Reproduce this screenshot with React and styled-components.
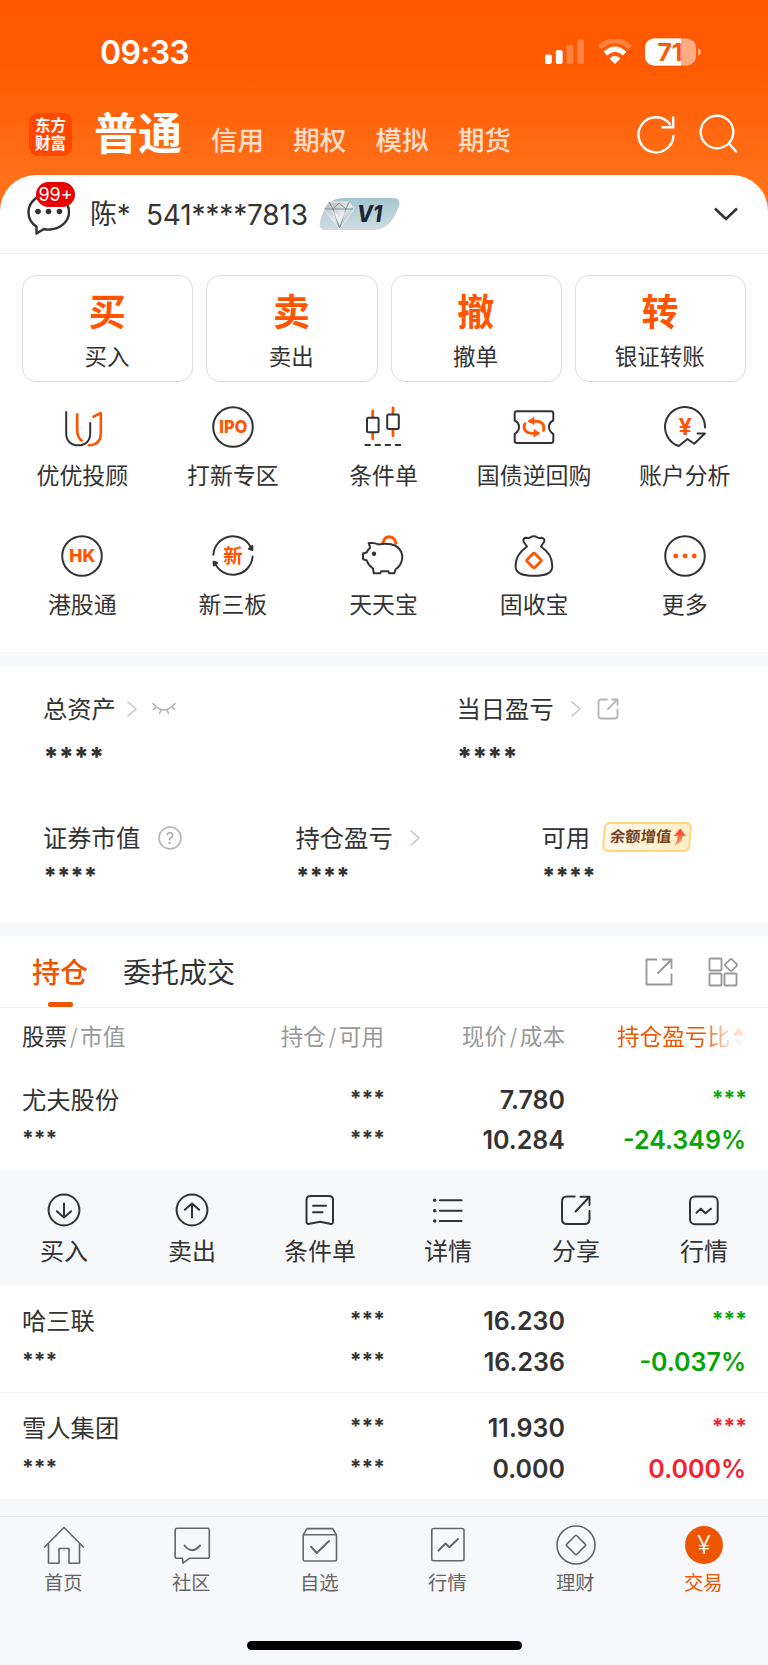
// src/App.jsx
import React from 'react';
import styled, { createGlobalStyle } from 'styled-components';

const GlobalStyle = createGlobalStyle`
  * {
    box-sizing: border-box;
  }
  body {
    margin: 0;
    background: #f7f8fa;
    color: #333;
    font-family: Inter, "Noto Sans CJK SC", sans-serif;
  }
`;

const Page = styled.div`
  width: 768px;
  height: 1665px;
  display: flex;
  flex-direction: column;
  overflow: hidden;
  background: linear-gradient(#ff5800 0, #ff5a02 66px, #ff7019 175px, #ff711a 220px, #f7f8fa 220px);
`;

const Svg = styled.svg`
  display: block;
  flex: none;
  fill: none;
  stroke: ${props => props.$color || '#333'};
  stroke-width: ${props => props.$line || 2};
  stroke-linecap: ${props => props.$cap || 'round'};
  stroke-linejoin: round;
  text {
    stroke: none;
    text-anchor: middle;
  }
`;

/* ---------- status bar ---------- */

const StatusBar = styled.div`
  height: 105px;
  padding: 0 67px 0 100px;
  display: flex;
  align-items: center;
`;

const Clock = styled.div`
  flex: 1;
  color: #fff;
  font-size: 32px;
  font-weight: 600;
  letter-spacing: -0.7px;
`;

const StatusIcons = styled.div`
  display: flex;
  align-items: center;
  gap: 13.5px;
`;

/* ---------- header ---------- */

const Header = styled.div`
  height: 70px;
  padding: 0 29px 0 29px;
  display: flex;
  align-items: center;
  color: #fff;
`;

const Logo = styled.div`
  width: 43px;
  height: 43px;
  margin: -11px 22px 0 0;
  padding-top: 1px;
  border-radius: 9px;
  background: #ff4700;
  display: flex;
  flex-direction: column;
  align-items: center;
  justify-content: center;
  font-size: 15.5px;
  font-weight: 700;
  line-height: 18px;
`;

const MainTab = styled.div`
  margin-top: -11px;
  font-size: 44px;
  font-weight: 700;
  line-height: 50px;
`;

const SubTabs = styled.div`
  flex: 1;
  margin: 0 0 0 29px;
  display: flex;
  gap: 29.3px;
  font-size: 26.5px;
  font-weight: 500;
  line-height: 32px;
  color: rgba(255, 255, 255, 0.8);
`;

const HeaderIcons = styled.div`
  margin-top: -11px;
  display: flex;
  gap: 23px;
`;

/* ---------- account ---------- */

const Sheet = styled.div`
  border-radius: 36px 36px 0 0;
  background: #fff;
`;

const AccountRow = styled.div`
  height: 79px;
  padding: 1px 29px 0 26px;
  display: flex;
  align-items: center;
  border-bottom: 1px solid #ececec;
  font-size: 28px;
  line-height: 34px;
`;

const Message = styled.div`
  position: relative;
  width: 46px;
  margin: -5px 18px 0 0;
`;

const Badge = styled.span`
  position: absolute;
  left: 10px;
  top: -7px;
  width: 39px;
  height: 25px;
  border-radius: 13px;
  background: #eb0000;
  color: #fff;
  font-size: 18px;
  line-height: 26px;
  text-align: center;
`;

const Owner = styled.span`
  width: 56px;
  margin-top: 1px;
  font-size: 27px;
`;

const AccountNo = styled.span`
  width: 173px;
  margin-top: 1px;
  letter-spacing: -0.15px;
  white-space: nowrap;
`;

const Spacer = styled.span`
  flex: 1;
`;

/* ---------- trade buttons ---------- */

const TradeButtons = styled.div`
  padding: 21px 22px 0;
  display: grid;
  grid-template-columns: repeat(4, 1fr);
  gap: 13px;
`;

const TradeButton = styled.div`
  height: 107px;
  padding: 15px 1px 0 0;
  border: 1.4px solid #dcdcdc;
  border-radius: 14px;
  text-align: center;
`;

const TradeMark = styled.div`
  color: #ff5500;
  font-size: 37px;
  font-weight: 700;
  line-height: 43px;
`;

const TradeLabel = styled.div`
  margin-top: 8px;
  font-size: 22.5px;
  line-height: 30px;
`;

const ToolGrid = styled.div`
  height: 270px;
  padding: 23px 8px 0 7px;
  display: grid;
  grid-template-columns: repeat(5, 1fr);
  grid-auto-rows: 128.7px;
`;

const Tool = styled.div`
  display: flex;
  flex-direction: column;
  align-items: center;
  gap: 12.5px;
  font-size: 22.9px;
  line-height: 30px;
  white-space: nowrap;
`;

/* ---------- assets ---------- */

const Divider = styled.div`
  height: ${props => props.$h || 14}px;
  background: #f7f8fa;
`;

const AssetRow = styled.div`
  height: ${props => props.$h}px;
  padding: ${props => props.$top}px 0 0 43px;
  display: grid;
  grid-template-columns: ${props => props.$cols};
  background: #fff;
`;

const AssetTitle = styled.div`
  height: 32px;
  display: flex;
  align-items: center;
  font-size: 24.3px;
  line-height: 32px;
`;

const Masked = styled.div`
  margin-top: ${props => props.$top}px;
  padding-left: 0.5px;
  font-size: ${props => props.$size}px;
  font-weight: 800;
  line-height: 32px;
`;

const Gap = styled.span`
  width: ${props => props.$w}px;
`;

const Promo = styled.div`
  width: 88px;
  height: 30px;
  margin: -1px 0 0 13px;
  padding-left: 5px;
  display: flex;
  align-items: center;
  gap: 2px;
  border: 2px solid #ffd67a;
  border-radius: 6px;
  background: linear-gradient(90deg, #fffaf0, #ffedc4);
  transform: skewX(-5deg);
  color: #75421c;
  font-size: 15.3px;
  font-weight: 700;
  white-space: nowrap;
`;

/* ---------- holdings ---------- */

const Tabs = styled.div`
  height: 72px;
  padding: 0 30px 0 32px;
  display: flex;
  align-items: stretch;
  gap: 35px;
  border-bottom: 1px solid #f2f3f5;
  background: #fff;
`;

const Tab = styled.div`
  display: flex;
  flex-direction: column;
  align-items: center;
  padding-top: 19px;
  font-size: 28px;
  line-height: 36px;
  font-weight: ${props => (props.$active ? 500 : 400)};
  color: ${props => (props.$active ? '#ee5500' : '#333')};
  &::after {
    content: '';
    width: 25px;
    height: 5px;
    margin-top: 11px;
    border-radius: 2px;
    background: ${props => (props.$active ? '#ee5500' : 'transparent')};
  }
`;

const TabTools = styled.div`
  flex: 1;
  padding-top: 1px;
  display: flex;
  justify-content: flex-end;
  align-items: center;
  gap: 35px;
`;

const TableGrid = styled.div`
  padding: 0 22px;
  display: grid;
  grid-template-columns: 180px 182px 181px 181px;
  background: #fff;
`;

const TableHead = styled(TableGrid)`
  height: 57px;
  line-height: 30px;
  padding-top: 14px;
  font-size: 22.6px;
  color: #999;
`;

const HeadCell = styled.div`
  text-align: ${props => (props.$left ? 'left' : 'right')};
  white-space: nowrap;
  b {
    color: #333;
    font-weight: 400;
  }
  i {
    margin: 0 2.5px;
    font-style: normal;
    font-weight: 300;
  }
`;

const SortCell = styled.div`
  height: 30px;
  display: flex;
  align-items: center;
  justify-content: flex-end;
  gap: 2px;
  color: #ee5500;
  mask-image: linear-gradient(90deg, #000 76%, rgba(0, 0, 0, 0.3) 89%, rgba(0, 0, 0, 0.12));
`;

const StockRow = styled(TableGrid)`
  height: 107px;
  padding-top: 15px;
  border-bottom: 1px solid #f5f6f8;
`;

const Cell = styled.div`
  text-align: ${props => (props.$left ? 'left' : 'right')};
  color: ${props => props.$color || '#333'};
  font-size: 25px;
  font-weight: 600;
  line-height: 40.5px;
  white-space: nowrap;
`;

const StockName = styled.div`
  font-size: 24.3px;
  font-weight: 400;
`;

const Stars = styled.div`
  height: 40.5px;
  margin-right: -1px;
  font-size: 21px;
  font-weight: 700;
  line-height: 38.5px;
`;

const Actions = styled.div`
  height: 115px;
  padding-top: 19px;
  display: grid;
  grid-template-columns: repeat(6, 1fr);
  background: #f7f8fa;
`;

const Action = styled.div`
  display: flex;
  flex-direction: column;
  align-items: center;
  gap: 7px;
  font-size: 24px;
  line-height: 30px;
`;

/* ---------- bottom navigation ---------- */

const BottomNav = styled.div`
  height: 125px;
  padding-top: 6px;
  display: grid;
  grid-template-columns: repeat(6, 1fr);
  border-top: 1px solid #e9eaec;
  background: #f7f8fb;
`;

const NavItem = styled.div`
  display: flex;
  flex-direction: column;
  align-items: center;
  gap: 4px;
  font-size: 19.3px;
  line-height: 24px;
  color: ${props => (props.$active ? '#ee5500' : '#666')};
  span {
    padding-right: 1.5px;
  }
`;

const HomeBar = styled.div`
  width: 275px;
  height: 9px;
  margin: 0 auto 15px;
  border-radius: 5px;
  background: #000;
`;

const HomeArea = styled.div`
  background: #f7f8fb;
`;

/* ---------- icons ---------- */

const O = '#ff5500';

const Signal = () => (
  <Svg width="39" height="26" viewBox="0 0 39 26" $color="none">
    <g fill="#fff">
      <rect x="0" y="15.5" width="6.8" height="9.5" rx="2" />
      <rect x="10.8" y="11" width="6.8" height="14" rx="2" />
      <rect x="21.5" y="6" width="6.8" height="19" rx="2" opacity="0.25" />
      <rect x="32.2" y="0.5" width="6.8" height="24.5" rx="2" opacity="0.25" />
    </g>
  </Svg>
);

const Wifi = () => (
  <Svg width="34" height="26" viewBox="0 0 34 26" $color="#fff" $line="5" $cap="butt">
    <path d="M1.8 8.5Q17-5.2 32.2 8.5" opacity="0.25" />
    <path d="M7.4 14.6Q17 5.6 26.6 14.6" />
    <path d="M17 25L11.6 19.4Q17 14.6 22.4 19.4Z" fill="#fff" stroke="none" />
  </Svg>
);

const Battery = () => (
  <Svg width="56" height="28" viewBox="0 0 56 28" $color="none">
    <defs>
      <clipPath id="batteryBody">
        <rect x="0" y="0.5" width="51" height="27" rx="9" />
      </clipPath>
    </defs>
    <g clipPath="url(#batteryBody)">
      <rect width="51" height="28" fill="#fff" opacity="0.5" />
      <rect width="36" height="28" fill="#fff" />
    </g>
    <path d="M53 10Q56 11.5 56 14T53 18Z" fill="#fff" opacity="0.5" />
    <text x="25" y="22.5" fontSize="24" fontWeight="700" fill="#ff5800" textLength="25" lengthAdjust="spacingAndGlyphs">71</text>
  </Svg>
);

const Refresh = () => (
  <Svg width="40" height="40" viewBox="0 0 40 40" $color="#fff" $line="2.4" $cap="butt">
    <path d="M37.5 21A17.5 17.5 0 1 1 34.5 11" />
    <path d="M37.2 2.5V13.3H25.5" strokeLinejoin="miter" />
  </Svg>
);

const Search = () => (
  <Svg width="40" height="40" viewBox="0 0 40 40" $color="#fff" $line="2.4">
    <circle cx="18" cy="18" r="16.3" />
    <path d="M30 29.5L37 37.5" />
  </Svg>
);

const Bubble = () => (
  <Svg width="46" height="46" viewBox="0 0 46 46" $line="2.4">
    <path d="M10.5 37.5L10.5 44.5L18 40Q21 41 24 40.5C35 40 43 32 43 23C43 13 34 5 23 5S2.5 13 2.5 23C2.5 29 5.5 34.5 10.5 37.5Z" />
    <g fill="#333" stroke="none">
      <circle cx="12" cy="22.5" r="2.8" />
      <circle cx="22.5" cy="22.5" r="2.8" />
      <circle cx="33.5" cy="22.5" r="2.8" />
    </g>
  </Svg>
);

const VipBadge = () => (
  <Svg width="82" height="32" viewBox="0 0 82 32" $color="none">
    <defs>
      <linearGradient id="vipBg" x1="0" y1="0" x2="0" y2="1">
        <stop offset="0" stopColor="#a5c5d0" />
        <stop offset="1" stopColor="#cfdde3" />
      </linearGradient>
      <linearGradient id="gem" x1="0" y1="0" x2="1" y2="1">
        <stop offset="0" stopColor="#aab3b6" />
        <stop offset="0.5" stopColor="#e4e9eb" />
        <stop offset="1" stopColor="#8f9b9f" />
      </linearGradient>
    </defs>
    <path d="M24 0H74Q82 0 80 8C75 22 68 32 54 32H7Q-1 32 1 24C4 12 10 0 24 0Z" fill="url(#vipBg)" />
    <path d="M10 4H30L35 11L20.5 31L5 11Z" fill="url(#gem)" stroke="#f4f7f8" strokeWidth="0.8" />
    <path d="M6 11H34M10 4L14 11L20.5 30L27 11L30 4M14 11L20 5L27 11" stroke="#7f8d92" strokeWidth="1" />
    <path d="M13 12L20.5 19L28 12L20.5 27Z" fill="#fff" opacity="0.6" />
    <text x="50.5" y="24" fontSize="23" fontWeight="800" fontStyle="italic" fill="#1d2736" textLength="25" lengthAdjust="spacingAndGlyphs">V1</text>
  </Svg>
);

const ChevronDown = () => (
  <Svg width="26" height="16" viewBox="0 0 26 16" $line="2.6" $cap="butt">
    <path d="M2 2.5L13 13L24 2.5" strokeLinejoin="miter" />
  </Svg>
);

const ChevronRight = () => (
  <Svg width="10" height="16" viewBox="0 0 10 16" $color="#c4c4c4" $line="1.5">
    <path d="M1 1L9 8L1 15" />
  </Svg>
);

const ClosedEye = () => (
  <Svg width="24" height="14" viewBox="0 0 24 14" $color="#b5b5b5" $line="1.6">
    <path d="M1 1.5Q12 14.5 23 1.5M4 5L1.5 7.5M8.8 8L7.5 11.5M15.2 8L16.5 11.5M20 5L22.5 7.5" />
  </Svg>
);

const ShareSmall = () => (
  <Svg width="22" height="22" viewBox="0 0 22 22" $color="#b5b5b5" $line="1.8">
    <path d="M10 1.5H4.5Q1.5 1.5 1.5 4.5V17.5Q1.5 20.5 4.5 20.5H17.5Q20.5 20.5 20.5 17.5V11.5" />
    <path d="M11 11L20.3 1.7M15 1.5H20.5V7" />
  </Svg>
);

const Help = () => (
  <Svg width="24" height="24" viewBox="0 0 24 24" $color="#b5b5b5" $line="1.6">
    <circle cx="12" cy="12" r="11" />
    <text x="12" y="17.8" fontSize="16.5" fill="#aaa">?</text>
  </Svg>
);

const RiseArrow = () => (
  <Svg width="13" height="18" viewBox="0 0 13 18" $color="none">
    <defs>
      <linearGradient id="rise" x1="0" y1="0" x2="0" y2="1">
        <stop offset="0" stopColor="#ff3b2a" />
        <stop offset="1" stopColor="#ff9a5a" />
      </linearGradient>
    </defs>
    <path d="M6.5 0.5L13 8H9.5Q9.5 14.5 2 17.5Q5 13.5 4.5 8H0.5Z" fill="url(#rise)" />
  </Svg>
);

const ShareTab = () => (
  <Svg width="28" height="28" viewBox="0 0 28 28" $color="#999" $line="1.9" $cap="butt">
    <path d="M12 1.5H1.5V26.5H26.5V15.5" />
    <path d="M12.5 15.5L26 2M17 1.5H26.5V11" />
  </Svg>
);

const GridTab = () => (
  <Svg width="30" height="30" viewBox="0 0 30 30" $color="#999" $line="1.9">
    <rect x="1.5" y="1.5" width="12" height="12" rx="1" />
    <rect x="1.5" y="16.5" width="12" height="12" rx="1" />
    <rect x="16.5" y="16.5" width="12" height="12" rx="1" />
    <rect x="18.4" y="3.4" width="9.2" height="9.2" rx="1.5" transform="rotate(45 23 8)" />
  </Svg>
);

const SortArrows = () => (
  <Svg width="14" height="20" viewBox="0 0 14 20" $color="none">
    <path d="M7 0.5L13.5 8.5H0.5Z" fill="#ee5500" />
    <path d="M7 19.5L13.5 11.5H0.5Z" fill="#ccc" />
  </Svg>
);

const toolIcons = {
  uu: (
    <>
      <path d="M6.2 7V28.5C6.2 36 11 40.3 18.2 40.3S30.2 36 30.2 28.5V18" />
      <path d="M17.2 9.3V25Q17.2 32.5 21.8 35.6M33.5 11.6L40.8 8V28C40.8 36 36.5 40 28.8 40.3" stroke={O} strokeWidth="2.6" />
    </>
  ),
  ipo: (
    <>
      <circle cx="22" cy="22" r="19.8" />
      <text x="22.3" y="28.4" fontSize="17.5" fontWeight="800" fill={O} textLength="28" lengthAdjust="spacingAndGlyphs">IPO</text>
    </>
  ),
  candle: (
    <>
      <path d="M11.7 6V12M11.7 28V33.8M32 3V9M32 25V30.8" stroke={O} strokeWidth="2.8" />
      <rect x="6" y="12.8" width="11.6" height="14.4" rx="1.5" />
      <rect x="26.2" y="9.6" width="11.6" height="14.4" rx="1.5" />
      <path d="M4.5 40H40" strokeDasharray="4.4 5.7" strokeWidth="2.2" />
    </>
  ),
  bond: (
    <>
      <path d="M5 6.3H39Q41.3 6.3 41.3 8.6V15.5Q37 17.5 37 22T41.3 28.8V35.8Q41.3 38 39 38H5Q2.7 38 2.7 35.8V28.8Q7 26.5 7 22T2.7 15.5V8.6Q2.7 6.3 5 6.3Z" />
      <path d="M18 16.3H25C30 16.3 33 20 31.5 25.3M26 28.3H20C13 28.3 10.5 23 13 18.6" stroke={O} strokeWidth="2.8" />
      <path d="M22 12.5V19.5L16.5 16.3ZM22 24.8V31.8L27.5 28.3Z" fill={O} stroke={O} strokeWidth="0.8" />
    </>
  ),
  analysis: (
    <>
      <path d="M42 22.5A20 20 0 1 0 15.8 41L24.5 34L31.2 38.8L42 28.6H34.5" />
      <text x="22.2" y="29.8" fontSize="23.5" fontWeight="700" fill={O}>¥</text>
    </>
  ),
  hk: (
    <>
      <circle cx="22" cy="22" r="19.8" />
      <text x="22.3" y="28.4" fontSize="18" fontWeight="800" fill={O} textLength="26" lengthAdjust="spacingAndGlyphs">HK</text>
    </>
  ),
  neeq: (
    <>
      <path d="M2.4 20.8A19.7 19.7 0 0 1 40.5 15M41.6 22.5A19.7 19.7 0 0 1 3.5 28" />
      <path d="M38 14.8L41.5 16L41.2 12ZM6 28.8L2.5 27.8L3 31.5Z" fill="#333" />
      <text x="22" y="28.8" fontSize="19.5" fontWeight="700" fill={O}>新</text>
    </>
  ),
  pig: (
    <>
      <path d="M22 8.8C23 4.5 26 2.8 28.5 2.8C32 3 34.5 6 34.7 9.3" stroke={O} strokeWidth="3" />
      <path d="M8 9.8Q7 8.8 9 9Q14 8.5 17.3 10.4Q24 9.3 30 10.3C37 11.5 41.3 17 41.3 23Q41 31 34.5 35.5L33.3 39.2H28L27.3 37.3H20.3L19.3 39.2H12.7L12 34.5Q7.5 31.5 5.7 26.5L2 25V19.5L5.7 18.5Q6.5 16 9 14Q9 12 8 9.8Z" />
      <circle cx="13" cy="19.8" r="2.2" fill="#333" stroke="none" />
    </>
  ),
  bag: (
    <>
      <path d="M15 12.5L11.7 8Q10.5 3.8 14.5 3.8Q17 4.5 18 3.5Q22 1 25.5 3.5Q27 4.5 29.5 3.8Q33.5 4.5 32 8L29 12.5C37 18 40.8 25 40.2 33.5C39.5 40 33 41.7 22 41.7S4.5 40 3.7 33.5C3 25 7 18 15 12.5Z" />
      <rect x="16.5" y="21" width="11" height="11" rx="1.5" transform="rotate(45 22 26.5)" stroke={O} strokeWidth="2.8" />
    </>
  ),
  more: (
    <>
      <circle cx="22" cy="22" r="19.8" />
      <g fill={O} stroke="none">
        <circle cx="12.7" cy="22" r="2.4" />
        <circle cx="22" cy="22" r="2.4" />
        <circle cx="31.3" cy="22" r="2.4" />
      </g>
    </>
  ),
};

const actionIcons = {
  buy: (
    <>
      <circle cx="20" cy="20" r="15.4" />
      <path d="M20 13.5V27.5M12.8 21.2L20 27.5L27.2 21.2" />
    </>
  ),
  sell: (
    <>
      <circle cx="20" cy="20" r="15.4" />
      <path d="M20 27.5V13.5M12.8 19.8L20 13.5L27.2 19.8" />
    </>
  ),
  order: (
    <>
      <path d="M10.5 6H29Q33 6 33 10V32Q33 34.5 30 33.8L20 31.7L9.5 33.8Q6.5 34.5 6.5 32V10Q6.5 6 10.5 6Z" />
      <path d="M13 15.7H26M13 22.3H22.5" />
    </>
  ),
  detail: (
    <>
      <path d="M12 10.3H33.5M12 20.7H33.5M12 31H33.5" />
      <path d="M6.7 10.3V10.3M6.7 20.7V20.7M6.7 31V31" strokeWidth="3.6" />
    </>
  ),
  share: (
    <>
      <path d="M18.7 6.5H11Q6 6.5 6 11.5V29Q6 34 11 34H28.5Q33.5 34 33.5 29V21" />
      <path d="M19.5 21.5L33.3 7M24.5 6.7H33.5V15" />
    </>
  ),
  quote: (
    <>
      <rect x="6" y="6.5" width="27.7" height="27.7" rx="5" />
      <path d="M12.5 22.8L16.8 18.8L21.5 23.3L27 18.8" />
    </>
  ),
};

const navIcons = {
  home: <path d="M2.7 24L22 4.5L41.3 24M6.5 21V40.3H17V25.5H27V40.3H37.5V21" />,
  club: (
    <>
      <path d="M7 5.3H37.5Q39.3 5.3 39.3 7V33.5Q39.3 35.3 37.5 35.3H19.3L13 40.2L12.5 35.3H7Q5.2 35.3 5.2 33.5V7Q5.2 5.3 7 5.3Z" />
      <path d="M14.5 22.5Q22 32 30 22.5" strokeWidth="2" />
    </>
  ),
  pick: (
    <>
      <path d="M5.2 11.8L9 5.6H34.7L38.5 11.8V36.5Q38.5 38 37 38H6.7Q5.2 38 5.2 36.5ZM5.2 11.8H38.5" />
      <path d="M13 23.7L18.7 30L31 18" strokeWidth="2" />
    </>
  ),
  market: (
    <>
      <rect x="5.8" y="5.5" width="32.2" height="32.3" rx="1.5" />
      <path d="M12.5 27.5L19.5 20.5L23.3 24.3L32 16" strokeWidth="2" />
    </>
  ),
  wealth: (
    <>
      <circle cx="22" cy="22" r="19" />
      <rect x="14.9" y="14.9" width="14.2" height="14.2" rx="0.8" transform="rotate(45 22 22)" />
    </>
  ),
  trade: (
    <>
      <circle cx="22" cy="22" r="19" fill="#ee5500" stroke="none" />
      <text x="22" y="31" fontSize="25" fontWeight="300" fill="#fff">¥</text>
    </>
  ),
};

/* ---------- data ---------- */

const trades = [
  ['买', '买入'],
  ['卖', '卖出'],
  ['撤', '撤单'],
  ['转', '银证转账'],
];

const tools = [
  ['uu', '优优投顾'],
  ['ipo', '打新专区'],
  ['candle', '条件单'],
  ['bond', '国债逆回购'],
  ['analysis', '账户分析'],
  ['hk', '港股通'],
  ['neeq', '新三板'],
  ['pig', '天天宝'],
  ['bag', '固收宝'],
  ['more', '更多'],
];

const actions = [
  ['buy', '买入'],
  ['sell', '卖出'],
  ['order', '条件单'],
  ['detail', '详情'],
  ['share', '分享'],
  ['quote', '行情'],
];

const navs = [
  ['home', '首页'],
  ['club', '社区'],
  ['pick', '自选'],
  ['market', '行情'],
  ['wealth', '理财'],
  ['trade', '交易'],
];

const stocks = [
  { name: '尤夫股份', price: '7.780', cost: '10.284', rate: '-24.349%', color: '#07a307', open: true },
  { name: '哈三联', price: '16.230', cost: '16.236', rate: '-0.037%', color: '#07a307' },
  { name: '雪人集团', price: '11.930', cost: '0.000', rate: '0.000%', color: '#f5222d' },
];

const Stock = ({ stock }) => (
  <StockRow>
    <Cell $left>
      <StockName>{stock.name}</StockName>
      <Stars>***</Stars>
    </Cell>
    <Cell>
      <Stars>***</Stars>
      <Stars>***</Stars>
    </Cell>
    <Cell>
      <div>{stock.price}</div>
      <div>{stock.cost}</div>
    </Cell>
    <Cell $color={stock.color}>
      <Stars>***</Stars>
      <div>{stock.rate}</div>
    </Cell>
  </StockRow>
);

const App = () => (
  <Page>
    <GlobalStyle />
    <StatusBar>
      <Clock>09:33</Clock>
      <StatusIcons>
        <Signal />
        <Wifi />
        <Battery />
      </StatusIcons>
    </StatusBar>

    <Header>
      <Logo>
        <span>东方</span>
        <span>财富</span>
      </Logo>
      <MainTab>普通</MainTab>
      <SubTabs>
        <span>信用</span>
        <span>期权</span>
        <span>模拟</span>
        <span>期货</span>
      </SubTabs>
      <HeaderIcons>
        <Refresh />
        <Search />
      </HeaderIcons>
    </Header>

    <Sheet>
      <AccountRow>
        <Message>
          <Bubble />
          <Badge>99+</Badge>
        </Message>
        <Owner>陈*</Owner>
        <AccountNo>541****7813</AccountNo>
        <VipBadge />
        <Spacer />
        <ChevronDown />
      </AccountRow>

      <TradeButtons>
        {trades.map(([mark, label]) => (
          <TradeButton key={mark}>
            <TradeMark>{mark}</TradeMark>
            <TradeLabel>{label}</TradeLabel>
          </TradeButton>
        ))}
      </TradeButtons>

      <ToolGrid>
        {tools.map(([icon, label]) => (
          <Tool key={icon}>
            <Svg width="44" height="44" viewBox="0 0 44 44">{toolIcons[icon]}</Svg>
            <span>{label}</span>
          </Tool>
        ))}
      </ToolGrid>
    </Sheet>

    <Divider />

    <AssetRow $h={141} $top={27.5} $cols="413.500px 1fr">
      <div>
        <AssetTitle>
          总资产
          <Gap $w={11} />
          <ChevronRight />
          <Gap $w={15} />
          <ClosedEye />
        </AssetTitle>
        <Masked $top={15.5} $size={26}>****</Masked>
      </div>
      <div>
        <AssetTitle>
          当日盈亏
          <Gap $w={17} />
          <ChevronRight />
          <Gap $w={16} />
          <ShareSmall />
        </AssetTitle>
        <Masked $top={15.5} $size={26}>****</Masked>
      </div>
    </AssetRow>
    <AssetRow $h={115} $top={15} $cols="252.500px 246px 1fr">
      <div>
        <AssetTitle>
          证券市值
          <Gap $w={17.5} />
          <Help />
        </AssetTitle>
        <Masked $top={6} $size={23}>****</Masked>
      </div>
      <div>
        <AssetTitle>
          持仓盈亏
          <Gap $w={17.5} />
          <ChevronRight />
        </AssetTitle>
        <Masked $top={6} $size={23}>****</Masked>
      </div>
      <div>
        <AssetTitle>
          可用
          <Promo>
            余额增值
            <RiseArrow />
          </Promo>
        </AssetTitle>
        <Masked $top={6} $size={23}>****</Masked>
      </div>
    </AssetRow>

    <Divider />

    <Tabs>
      <Tab $active>持仓</Tab>
      <Tab>委托成交</Tab>
      <TabTools>
        <ShareTab />
        <GridTab />
      </TabTools>
    </Tabs>

    <TableHead>
      <HeadCell $left><b>股票</b><i>/</i>市值</HeadCell>
      <HeadCell>持仓<i>/</i>可用</HeadCell>
      <HeadCell>现价<i>/</i>成本</HeadCell>
      <SortCell>
        持仓盈亏比
        <SortArrows />
      </SortCell>
    </TableHead>

    {stocks.map(stock => (
      <React.Fragment key={stock.name}>
        <Stock stock={stock} />
        {stock.open && (
          <Actions>
            {actions.map(([icon, label]) => (
              <Action key={icon}>
                <Svg width="40" height="40" viewBox="0 0 40 40">{actionIcons[icon]}</Svg>
                <span>{label}</span>
              </Action>
            ))}
          </Actions>
        )}
      </React.Fragment>
    ))}

    <Divider $h={16} />

    <BottomNav>
      {navs.map(([icon, label]) => (
        <NavItem key={icon} $active={icon === 'trade'}>
          <Svg width="44" height="44" viewBox="0 0 44 44" $color="#666" $line="1.6">{navIcons[icon]}</Svg>
          <span>{label}</span>
        </NavItem>
      ))}
    </BottomNav>
    <HomeArea>
      <HomeBar />
    </HomeArea>
  </Page>
);

export default App;
